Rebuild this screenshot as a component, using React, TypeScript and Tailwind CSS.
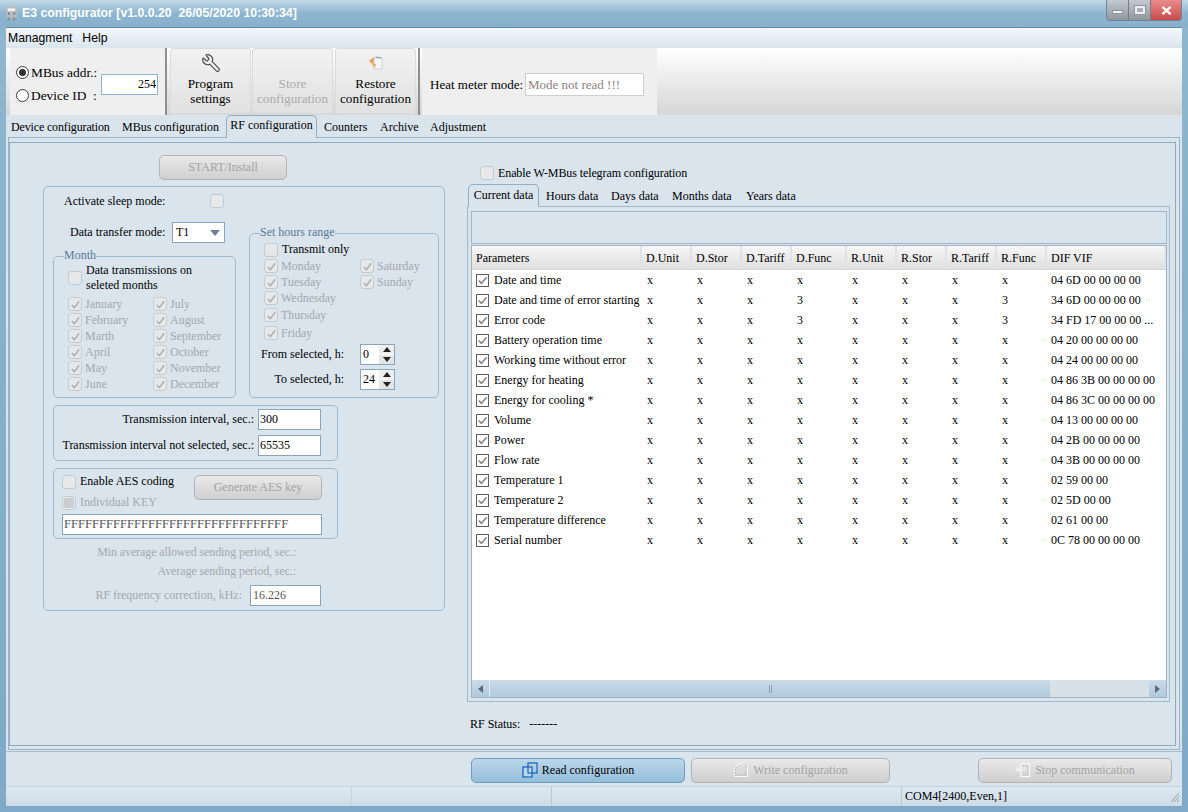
import { Wrench } from "lucide-react";
import type { ReactNode } from "react";

/* --------------------------- shared bits --------------------------- */
const months = [
    ["January", "July"],
    ["February", "August"],
    ["Marth", "September"],
    ["April", "October"],
    ["May", "November"],
    ["June", "December"],
];

const params: [string, string, string][] = [
    ["Date and time", "x", "04 6D 00 00 00 00"],
    ["Date and time of error starting", "3", "34 6D 00 00 00 00"],
    ["Error code", "3", "34 FD 17 00 00 00 ..."],
    ["Battery operation time", "x", "04 20 00 00 00 00"],
    ["Working time without error", "x", "04 24 00 00 00 00"],
    ["Energy for heating", "x", "04 86 3B 00 00 00 00"],
    ["Energy for cooling *", "x", "04 86 3C 00 00 00 00"],
    ["Volume", "x", "04 13 00 00 00 00"],
    ["Power", "x", "04 2B 00 00 00 00"],
    ["Flow rate", "x", "04 3B 00 00 00 00"],
    ["Temperature 1", "x", "02 59 00 00"],
    ["Temperature 2", "x", "02 5D 00 00"],
    ["Temperature difference", "x", "02 61 00 00"],
    ["Serial number", "x", "0C 78 00 00 00 00"],
];

const headers = ["Parameters", "D.Unit", "D.Stor", "D.Tariff", "D.Func", "R.Unit", "R.Stor", "R.Tariff", "R.Func", "DIF VIF"];

const gridCols = "grid grid-cols-[170px_50px_50px_50px_55px_50px_50px_50px_50px_1fr]";

function Check({ checked, filled }: { checked?: boolean; filled?: boolean }) {
    return (
        <span className="w-[14px] h-[14px] shrink-0 rounded-[3px] border border-[#c4ccd3] bg-[#e6e8ea] flex items-center justify-center">
            {checked && (
                <svg viewBox="0 0 12 12" className="w-[11px] h-[11px]">
                    <path d="M2 6.5 L4.8 9.5 L10 2.5" fill="none" stroke="#a9aeb3" strokeWidth="1.6" />
                </svg>
            )}
            {filled && <span className="w-[10px] h-[10px] rounded-[2px] bg-[#c9cdd1]" />}
        </span>
    );
}

function GridCheck() {
    return (
        <span className="w-[13px] h-[13px] shrink-0 border border-[#5c5c5c] bg-white flex items-center justify-center">
            <svg viewBox="0 0 12 12" className="w-[11px] h-[11px]">
                <path d="M2 6 L4.8 9.3 L10.4 2.4" fill="none" stroke="#7d7d7d" strokeWidth="1.5" />
            </svg>
        </span>
    );
}

function DisabledItem({ label, className = "" }: { label: string; className?: string }) {
    return (
        <div className={`h-4 flex items-center gap-[3px] text-[#a4a8ac] ${className}`}>
            <Check checked />
            {label}
        </div>
    );
}

function Group({ title, className = "", children }: { title?: string; className?: string; children: ReactNode }) {
    return (
        <div className={`relative border border-[#9dbbd0] rounded-[5px] ${className}`}>
            {title && (
                <span className="absolute -top-[10px] left-[10px] bg-[#dae4ed] leading-[16px] text-[#5b7a94]">
                    {title}
                </span>
            )}
            {children}
        </div>
    );
}

function Field({ value, className = "", right }: { value: string; className?: string; right?: boolean }) {
    return (
        <div className={`h-[21px] bg-white border border-[#8aa4ba] flex items-center px-[1px] whitespace-nowrap ${right ? "justify-end" : ""} ${className}`}>
            {value}
        </div>
    );
}

function Spinner({ value }: { value: string }) {
    return (
        <div className="ml-[16px] w-[35px] h-[21px] bg-white border border-[#8aa4ba] flex items-center pl-[2px]">
            <span className="flex-1">{value}</span>
            <span className="w-[15px] h-[19px] flex flex-col gap-[1px]">
                <span className="flex-1 bg-[#eeeeee] flex items-center justify-center">
                    <svg viewBox="0 0 8 5" className="w-[8px] h-[5px]"><path d="M4 0 L8 5 L0 5 Z" fill="#222" /></svg>
                </span>
                <span className="flex-1 bg-[#e4e4e4] flex items-center justify-center">
                    <svg viewBox="0 0 8 5" className="w-[8px] h-[5px]"><path d="M0 0 L8 0 L4 5 Z" fill="#222" /></svg>
                </span>
            </span>
        </div>
    );
}

function WinButton({ label, width, className = "", children }: { label: string; width: string; className?: string; children?: ReactNode }) {
    return (
        <div className={`${width} h-[25px] rounded-[5px] border border-[#b3b3b3] bg-gradient-to-b from-[#e9e9e9] to-[#cfcfcf] text-[#a3a3a3] flex items-center justify-center gap-[4px] ${className}`}>
            {children}
            {label}
        </div>
    );
}

function ToolButton({ children, first, second, disabled }: { children?: ReactNode; first: string; second: string; disabled?: boolean }) {
    return (
        <div className={`w-[81px] h-[66px] rounded-[3px] border border-[#dcdcdc] bg-gradient-to-b from-[#f2f2f2] to-[#e1e1e1] flex flex-col items-center text-[13.2px] leading-[15px] whitespace-nowrap ${disabled ? "text-[#ababab]" : "text-black"}`}>
            <span className="h-[27px] flex items-center justify-center">{children}</span>
            <span>{first}</span>
            <span>{second}</span>
        </div>
    );
}

function Radio({ on }: { on?: boolean }) {
    return (
        <span className="w-[13px] h-[13px] rounded-full border border-[#3a3a3a] bg-white flex items-center justify-center">
            {on && <span className="w-[7px] h-[7px] rounded-full bg-[#333]" />}
        </span>
    );
}

/* --------------------------------- RENDER --------------------------------- */
export default function App() {
    return (
        <div className="w-[1188px] h-[812px] overflow-hidden flex flex-col bg-gradient-to-b from-[#8fb6d0] to-[#7fa9c6] text-[12px] leading-[15px] text-black font-['Liberation_Serif',serif]">
            {/* TITLE BAR */}
            <div className="h-[27px] shrink-0 flex bg-gradient-to-b from-[#c3d9e8] via-[#8cb5d0] to-[#87b1cc]">
                <div className="flex items-center pl-[5px] flex-1">
                    <svg viewBox="0 0 14 16" className="w-[13px] h-[15px]">
                        <rect x="1" y="0.5" width="12" height="12" rx="2" fill="#b9bcbf" />
                        <rect x="3" y="2.5" width="8" height="3" fill="#f2f2f2" />
                        <rect x="3" y="7" width="2" height="2" fill="#6e6e6e" />
                        <rect x="9" y="7" width="2" height="2" fill="#6e6e6e" />
                        <rect x="3" y="12.5" width="2.5" height="3" fill="#8d8f91" />
                        <rect x="8.5" y="12.5" width="2.5" height="3" fill="#8d8f91" />
                    </svg>
                    <span className="ml-[4px] text-white font-bold text-[12.3px] font-['Liberation_Sans',sans-serif] whitespace-pre">
                        E3 configurator [v1.0.0.20  26/05/2020 10:30:34]
                    </span>
                </div>
                {/* window buttons */}
                <div className="mr-[6px] w-[76px] h-[21px] flex rounded-b-[4px] border border-t-0 border-[#6f8597] overflow-hidden">
                    <div className="w-[22px] bg-gradient-to-b from-[#c3cbd1] to-[#8f979e] flex items-center justify-center border-r border-[#70808c]">
                        <span className="w-[11px] h-[4px] mt-[4px] bg-[#eef1f3] border border-[#8e979e]" />
                    </div>
                    <div className="w-[22px] bg-gradient-to-b from-[#c3cbd1] to-[#8f979e] flex items-center justify-center border-r border-[#70808c]">
                        <span className="w-[10px] h-[8px] border-2 border-[#eef1f3] outline outline-1 outline-[#8e979e]" />
                    </div>
                    <div className="flex-1 bg-gradient-to-b from-[#e88b8b] to-[#c94a4a] flex items-center justify-center">
                        <svg viewBox="0 0 12 10" className="w-[11px] h-[9px]">
                            <path d="M1.5 1 L10.5 9 M10.5 1 L1.5 9" stroke="#fff" strokeWidth="2.6" />
                        </svg>
                    </div>
                </div>
            </div>

            {/* WINDOW BODY */}
            <div className="mx-[6px] mb-[6px] flex-1 flex flex-col bg-[#dae4ed] border-t border-[#5f8bab]">
                {/* MENU */}
                <div className="h-[20px] shrink-0 flex items-center gap-[10px] pl-[2px] bg-gradient-to-b from-[#f4f8fc] to-[#dbe5ee] font-['Liberation_Sans',sans-serif] text-[12.2px]">
                    <span>Managment</span>
                    <span>Help</span>
                </div>

                {/* TOOLBAR */}
                <div className="h-[67px] shrink-0 flex pl-[4px] bg-gradient-to-b from-white to-[#d6d6d6]">
                    <div className="w-[155px] bg-[#efefef] flex items-center pl-[6px] pt-[4px]">
                        <div className="w-[82px] shrink-0 flex flex-col gap-[8px] text-[13.4px] whitespace-nowrap">
                            <div className="flex items-center gap-[2px]"><Radio on />MBus addr.:</div>
                            <div className="flex items-center gap-[2px]"><Radio />Device ID&nbsp; :</div>
                        </div>
                        <Field value="254" right className="ml-[3px] mt-[2px] w-[57px] border-[#8fb2cf] pr-[1px]" />
                    </div>
                    <div className="w-[2px] bg-[#8f8f8f] mr-[3px]" />
                    <ToolButton first="Program" second="settings">
                        <Wrench size={20} strokeWidth={1.3} className="text-[#4a4a4a] -scale-x-100" />
                    </ToolButton>
                    <div className="ml-[1px]">
                        <ToolButton first="Store" second="configuration" disabled />
                    </div>
                    <div className="ml-[2px]">
                        <ToolButton first="Restore" second="configuration">
                            <svg viewBox="0 0 16 16" className="w-[16px] h-[16px]">
                                <path d="M1 6 L6 2 L8 5 L5 9 Z" fill="#ea9a4a" />
                                <rect x="6" y="3" width="8" height="11" fill="#f6f6f6" stroke="#cfd4d8" />
                                <path d="M3 8 L7 13 L8 9 Z" fill="#e8b26e" />
                                <path d="M8 2 L13 3" stroke="#6f9fc9" strokeWidth="1.2" />
                            </svg>
                        </ToolButton>
                    </div>
                    <div className="w-[2px] bg-[#8f8f8f] ml-[2px] mr-[2px]" />
                    <div className="w-[235px] bg-[#efefef] flex items-center pl-[8px] pt-[6px] text-[13px] whitespace-nowrap">
                        <span className="w-[95px] shrink-0">Heat meter mode:</span>
                        <Field value="Mode not read !!!" className="w-[119px] h-[23px] border-[#cfcfcf] text-[#8f8080] pl-[2px]" />
                    </div>
                </div>

                {/* MAIN TABS */}
                <div className="h-[22px] shrink-0 flex items-end pl-[2px] relative z-10">
                    <span className="h-[17px] pl-[3px] w-[114px] tracking-[-0.15px]">Device configuration</span>
                    <span className="h-[17px] w-[104px]">MBus configuration</span>
                    <span className="h-[23px] w-[91px] -mb-[1px] pt-[2px] text-center rounded-t-[5px] border border-b-0 border-[#93afc4] bg-[#dae4ed]">RF configuration</span>
                    <span className="h-[17px] ml-[7px] w-[56px]">Counters</span>
                    <span className="h-[17px] w-[50px]">Archive</span>
                    <span className="h-[17px]">Adjustment</span>
                </div>

                {/* TAB PAGE */}
                <div className="mx-[2px] h-[613px] shrink-0 border border-[#9db3c5] pt-[4px] pr-[3px]">
                    <div className="h-[604px] border border-[#8faabf] flex">
                        {/* LEFT COLUMN */}
                        <div className="w-[457px] shrink-0 pl-[33px] pt-[12px]">
                            <WinButton label="START/Install" width="w-[128px]" className="ml-[116px]" />
                            <Group className="mt-[6px] w-[402px] h-[425px]">
                                <div className="mt-[7px] h-[14px] flex items-center pl-[20px]">
                                    <span className="w-[146px]">Activate sleep mode:</span>
                                    <Check />
                                </div>
                                <div className="mt-[14px] ml-[9px] flex">
                                    <div className="w-[183px] shrink-0">
                                        <div className="h-[21px] flex items-center">
                                            <span className="w-[119px] pl-[17px]">Data transfer mode:</span>
                                            <div className="w-[53px] h-[21px] bg-white border border-[#8aa4ba] flex items-center pl-[3px]">
                                                <span className="flex-1">T1</span>
                                                <svg viewBox="0 0 10 6" className="w-[10px] h-[6px] mr-[4px]"><path d="M0 0 L10 0 L5 6 Z" fill="#6d7f90" /></svg>
                                            </div>
                                        </div>
                                        {/* Month */}
                                        <Group title="Month" className="mt-[13px] h-[142px] pt-[6px] pl-[14px]">
                                            <div className="flex items-center gap-[4px]">
                                                <Check />
                                                <span>Data transmissions on<br />seleted months</span>
                                            </div>
                                            <div className="mt-[3px]">
                                                {months.map(([a, b]) => (
                                                    <div key={a} className="flex">
                                                        <DisabledItem label={a} className="w-[85px]" />
                                                        <DisabledItem label={b} />
                                                    </div>
                                                ))}
                                            </div>
                                        </Group>
                                    </div>
                                    {/* Set hours range */}
                                    <Group title="Set hours range" className="ml-[13px] mt-[11px] w-[190px] h-[165px] pl-[14px] pt-[8px]">
                                        <div className="flex items-center gap-[4px]"><Check />Transmit only</div>
                                        <div className="mt-[1px] flex">
                                            <div className="w-[96px]">
                                                <DisabledItem label="Monday" />
                                                <DisabledItem label="Tuesday" />
                                                <DisabledItem label="Wednesday" />
                                                <DisabledItem label="Thursday" className="mt-[1px]" />
                                                <DisabledItem label="Friday" className="mt-[2px]" />
                                            </div>
                                            <div>
                                                <DisabledItem label="Saturday" />
                                                <DisabledItem label="Sunday" />
                                            </div>
                                        </div>
                                        <div className="-ml-[14px] mt-[3px] flex items-center">
                                            <span className="w-[94px] text-right">From selected, h:</span>
                                            <Spinner value="0" />
                                        </div>
                                        <div className="-ml-[14px] mt-[4px] flex items-center">
                                            <span className="w-[94px] text-right">To selected, h:</span>
                                            <Spinner value="24" />
                                        </div>
                                    </Group>
                                </div>
                                {/* intervals */}
                                <Group className="mt-[7px] ml-[9px] w-[285px] h-[56px] pt-[3px]">
                                    <div className="flex items-center">
                                        <span className="w-[200px] text-right">Transmission interval, sec.:</span>
                                        <Field value="300" className="ml-[4px] w-[63px]" />
                                    </div>
                                    <div className="mt-[5px] flex items-center">
                                        <span className="w-[200px] text-right">Transmission interval not selected, sec.:</span>
                                        <Field value="65535" className="ml-[4px] w-[63px]" />
                                    </div>
                                </Group>
                                {/* AES */}
                                <Group className="mt-[7px] ml-[9px] w-[285px] h-[71px] pl-[8px] pt-[5px]">
                                    <div className="flex">
                                        <div className="w-[132px]">
                                            <div className="flex items-center gap-[4px]"><Check />Enable AES coding</div>
                                            <div className="mt-[6px] flex items-center gap-[4px] text-[#a4a8ac]"><Check filled />Individual KEY</div>
                                        </div>
                                        <WinButton label="Generate AES key" width="w-[128px]" className="mt-[1px]" />
                                    </div>
                                    <Field value="FFFFFFFFFFFFFFFFFFFFFFFFFFFFFFFF" className="mt-[4px] w-[260px] text-[#555] text-[12.6px]" />
                                </Group>
                                <div className="ml-[9px] text-[#a4a8ac]">
                                    <div className="mt-[6px] w-[243px] h-[16px] text-right tracking-[-0.1px]">Min average allowed sending period, sec.:</div>
                                    <div className="mt-[3px] w-[243px] h-[16px] text-right tracking-[-0.1px]">Average sending period, sec.:</div>
                                    <div className="mt-[5px] flex items-center">
                                        <span className="w-[189px] text-right">RF frequency correction, kHz:</span>
                                        <Field value="16.226" className="ml-[8px] w-[71px] text-[#555] pl-[2px]" />
                                    </div>
                                </div>
                            </Group>
                        </div>

                        {/* RIGHT COLUMN */}
                        <div className="w-[703px] shrink-0">
                            <div className="mt-[23px] h-[14px] pl-[13px] flex items-center gap-[4px] tracking-[-0.1px]"><Check />Enable W-MBus telegram configuration</div>
                            <div className="mt-[4px] h-[22px] flex items-end relative z-10 pl-[1px]">
                                <span className="h-[23px] w-[71px] -mb-[1px] pt-[3px] text-center rounded-t-[5px] border border-b-0 border-[#93afc4] bg-[#dae4ed]">Current data</span>
                                <span className="h-[17px] ml-[7px] w-[65px]">Hours data</span>
                                <span className="h-[17px] w-[61px]">Days data</span>
                                <span className="h-[17px] w-[74px]">Months data</span>
                                <span className="h-[17px]">Years data</span>
                            </div>
                            <div className="h-[496px] border border-[#a3bacb] pt-[4px] pl-[3px] pr-[2px]">
                                <div className="h-[33px] border border-[#9bb6cf]" />
                                <div className="mt-[1px] h-[453px] border border-[#a4b3bf] bg-white flex flex-col">
                                    <div className={`${gridCols} h-[24px] shrink-0 border-b border-[#d5d5d5]`}>
                                        {headers.map((h) => (
                                            <div key={h} className="pl-[4px] pt-[1px] flex items-center bg-gradient-to-b from-[#f7f7f7] to-[#dfdfdf] border-r-2 border-[#dde3e8]">{h}</div>
                                        ))}
                                    </div>
                                    <div className="flex-1">
                                        {params.map(([name, func, dif]) => (
                                            <div key={name} className={`${gridCols} h-[20px] items-center`}>
                                                <div className="pl-[4px] flex items-center gap-[5px] whitespace-nowrap"><GridCheck />{name}</div>
                                                {["x", "x", "x", func, "x", "x", "x", func].map((v, i) => (
                                                    <div key={i} className="pl-[5px]">{v}</div>
                                                ))}
                                                <div className="pl-[4px] whitespace-nowrap">{dif}</div>
                                            </div>
                                        ))}
                                    </div>
                                    {/* horizontal scrollbar */}
                                    <div className="h-[17px] shrink-0 flex bg-[#d7e1e8]">
                                        <div className="w-[17px] flex items-center justify-center bg-gradient-to-b from-[#c9dbe8] to-[#aecadd]">
                                            <svg viewBox="0 0 5 8" className="w-[5px] h-[8px]"><path d="M5 0 L5 8 L0 4 Z" fill="#5c6b77" /></svg>
                                        </div>
                                        <div className="w-[561px] flex items-center justify-center bg-gradient-to-b from-[#cadbe8] to-[#b1cbdd] border-l border-[#e4edf3]">
                                            <span className="w-[3px] h-[8px] border-x border-[#8ba3b4]" />
                                        </div>
                                        <div className="flex-1" />
                                        <div className="w-[17px] flex items-center justify-center bg-gradient-to-b from-[#c9dbe8] to-[#aecadd]">
                                            <svg viewBox="0 0 5 8" className="w-[5px] h-[8px]"><path d="M0 0 L5 4 L0 8 Z" fill="#5c6b77" /></svg>
                                        </div>
                                    </div>
                                </div>
                            </div>
                            <div className="mt-[14px] pl-[3px] h-[16px] flex items-center gap-[9px]">
                                <span>RF Status:</span><span>-------</span>
                            </div>
                        </div>
                    </div>
                </div>

                {/* ACTION BUTTONS */}
                <div className="mt-[1px] h-[35px] pt-[2px] shrink-0 border-t border-[#a9bdcc] flex items-center pl-[465px]">
                    <div className="w-[214px] h-[25px] rounded-[5px] border border-[#6f9cbe] bg-gradient-to-b from-[#bcd7ea] to-[#94bedb] flex items-center justify-center gap-[4px]">
                        <svg viewBox="0 0 16 16" className="w-[16px] h-[16px]">
                            <rect x="1" y="5" width="9" height="10" fill="#bcd7ea" stroke="#1462b8" strokeWidth="1.2" />
                            <rect x="6" y="1" width="9" height="10" fill="none" stroke="#1462b8" strokeWidth="1.2" />
                        </svg>
                        Read configuration
                    </div>
                    <WinButton label="Write configuration" width="w-[199px]" className="ml-[6px]">
                        <svg viewBox="0 0 16 16" className="w-[16px] h-[16px]">
                            <path d="M1 14.5 L14.5 14.5 L14.5 4" fill="none" stroke="#f8f8f8" strokeWidth="1.2" />
                            <path d="M1.5 13 L1.5 6 L6 1.5 L9 1.5" fill="none" stroke="#fafafa" strokeWidth="1.4" strokeDasharray="1.5 1.5" />
                            <path d="M2.5 13.2 L13.2 13.2 L13.2 4 M2.5 12 L2.5 7 L6.5 3" fill="none" stroke="#a8a8a8" strokeWidth="0.8" strokeDasharray="1.5 1.5" />
                        </svg>
                    </WinButton>
                    <WinButton label="Stop communication" width="w-[194px]" className="ml-[88px]">
                        <svg viewBox="0 0 16 16" className="w-[16px] h-[16px]">
                            <rect x="6" y="1.5" width="8.5" height="13" fill="none" stroke="#f8f8f8" strokeWidth="1.2" />
                            <path d="M7.5 3.5 L13 3.5 L13 13 L7.5 13" fill="none" stroke="#a8a8a8" strokeWidth="0.8" strokeDasharray="1.5 1.5" />
                            <path d="M1 8 L5 5 M1 8 L5 11 M1 8 L10 8" stroke="#fafafa" strokeWidth="1.4" strokeDasharray="1.5 1" />
                        </svg>
                    </WinButton>
                </div>

                {/* STATUS BAR */}
                <div className="flex-1 flex items-center border-t border-[#c2d2de] bg-gradient-to-b from-[#dee8f0] to-[#cddbe6]">
                    <span className="w-[346px] h-full border-r border-[#c6d4df]" />
                    <span className="w-[200px] h-full border-r border-[#b8c8d4]" />
                    <span className="w-[350px] h-full border-r border-[#b8c8d4]" />
                    <span className="pl-[3px] flex-1">COM4[2400,Even,1]</span>
                    <svg viewBox="0 0 10 12" className="w-[10px] h-[12px] mr-[2px]">
                        <path d="M1 11 L9 2 M4 11 L9 5.5 M7 11 L9 8.5" stroke="#8ba0b0" strokeWidth="1" />
                    </svg>
                </div>
            </div>
        </div>
    );
}
